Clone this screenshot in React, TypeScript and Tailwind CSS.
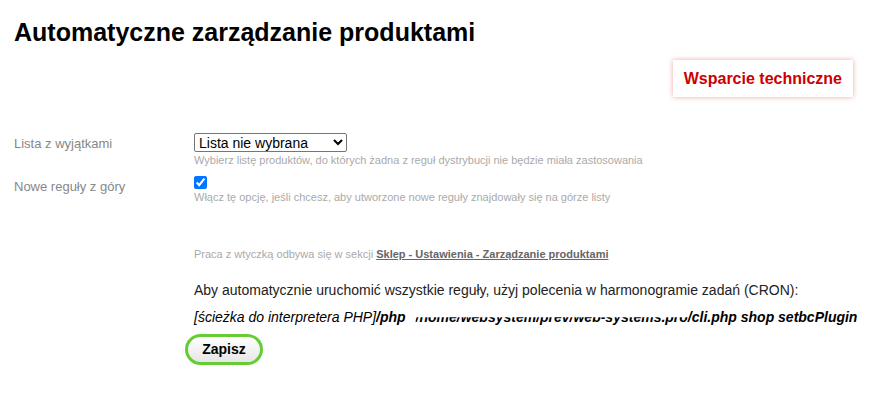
const App = () => {
  return (
    <div className="min-h-[415px] bg-white font-['Liberation_Sans',Arial,sans-serif] text-[#222]">
      <div className="px-[14px] pt-[16px]">
        <h1 className="text-[25px] font-bold leading-[32px] text-black">
          Automatyczne zarządzanie produktami
        </h1>
        <div className="flex justify-end pr-[4px] pt-[12px]">
          <a className="bg-white px-[11px] py-[8px] text-[16px] font-bold leading-[21px] text-[#c00] shadow-[0_0_5px_rgba(220,60,60,0.45)]">
            Wsparcie techniczne
          </a>
        </div>

        <div className="mt-[36px]">
          <div className="grid grid-cols-[180px_1fr]">
            <label className="pt-[2px] text-[13px] leading-[18px] text-[#888]">
              Lista z wyjątkami
            </label>
            <div>
              <select
                defaultValue=""
                className="block h-[19px] w-[153px] rounded-[2px] border border-[#767676] bg-white text-[14px] leading-[17px] text-black"
              >
                <option value="">Lista nie wybrana</option>
              </select>
              <p className="mt-[1px] text-[11px] leading-[14px] text-[#aaa]">
                Wybierz listę produktów, do których żadna z reguł dystrybucji
                nie będzie miała zastosowania
              </p>
            </div>
          </div>
          <div className="mt-[9px] grid grid-cols-[180px_1fr]">
            <label className="pt-[2px] text-[13px] leading-[18px] text-[#888]">
              Nowe reguły z góry
            </label>
            <div>
              <input
                type="checkbox"
                defaultChecked
                className="m-0 block h-[13px] w-[13px]"
              />
              <p className="mt-[1px] text-[11px] leading-[14px] text-[#aaa]">
                Włącz tę opcję, jeśli chcesz, aby utworzone nowe reguły
                znajdowały się na górze listy
              </p>
            </div>
          </div>
        </div>

        <div className="pl-[180px] pt-[43px]">
          <p className="text-[11px] leading-[14px] text-[#aaa]">
            Praca z wtyczką odbywa się w sekcji{" "}
            <a className="font-bold text-[#666] underline">
              Sklep - Ustawienia - Zarządzanie produktami
            </a>
          </p>
          <p className="mt-[20px] text-[14px] leading-[18px] text-[#222]">
            Aby automatycznie uruchomić wszystkie reguły, użyj polecenia w
            harmonogramie zadań (CRON):
          </p>
          <p className="mt-[9px] whitespace-nowrap text-[14px] leading-[18px] text-black italic">
            <span>[ścieżka do interpretera PHP]</span>
            <b>/php</b>{"  "}
            <b className="ml-[6px] inline-block [clip-path:inset(52%_0_0_0)]">
              /home/websystem/prev/web-systems.pro
            </b>
            <b>/cli.php shop setbcPlugin</b>
          </p>
          <button className="-ml-[9px] mt-[8px] h-[31px] w-[78px] rounded-full border-[3px] border-[#6c3] bg-gradient-to-b from-white to-[#e6e6e6] text-[14px] font-bold text-black">
            Zapisz
          </button>
        </div>
      </div>
    </div>
  );
};

export default App;
